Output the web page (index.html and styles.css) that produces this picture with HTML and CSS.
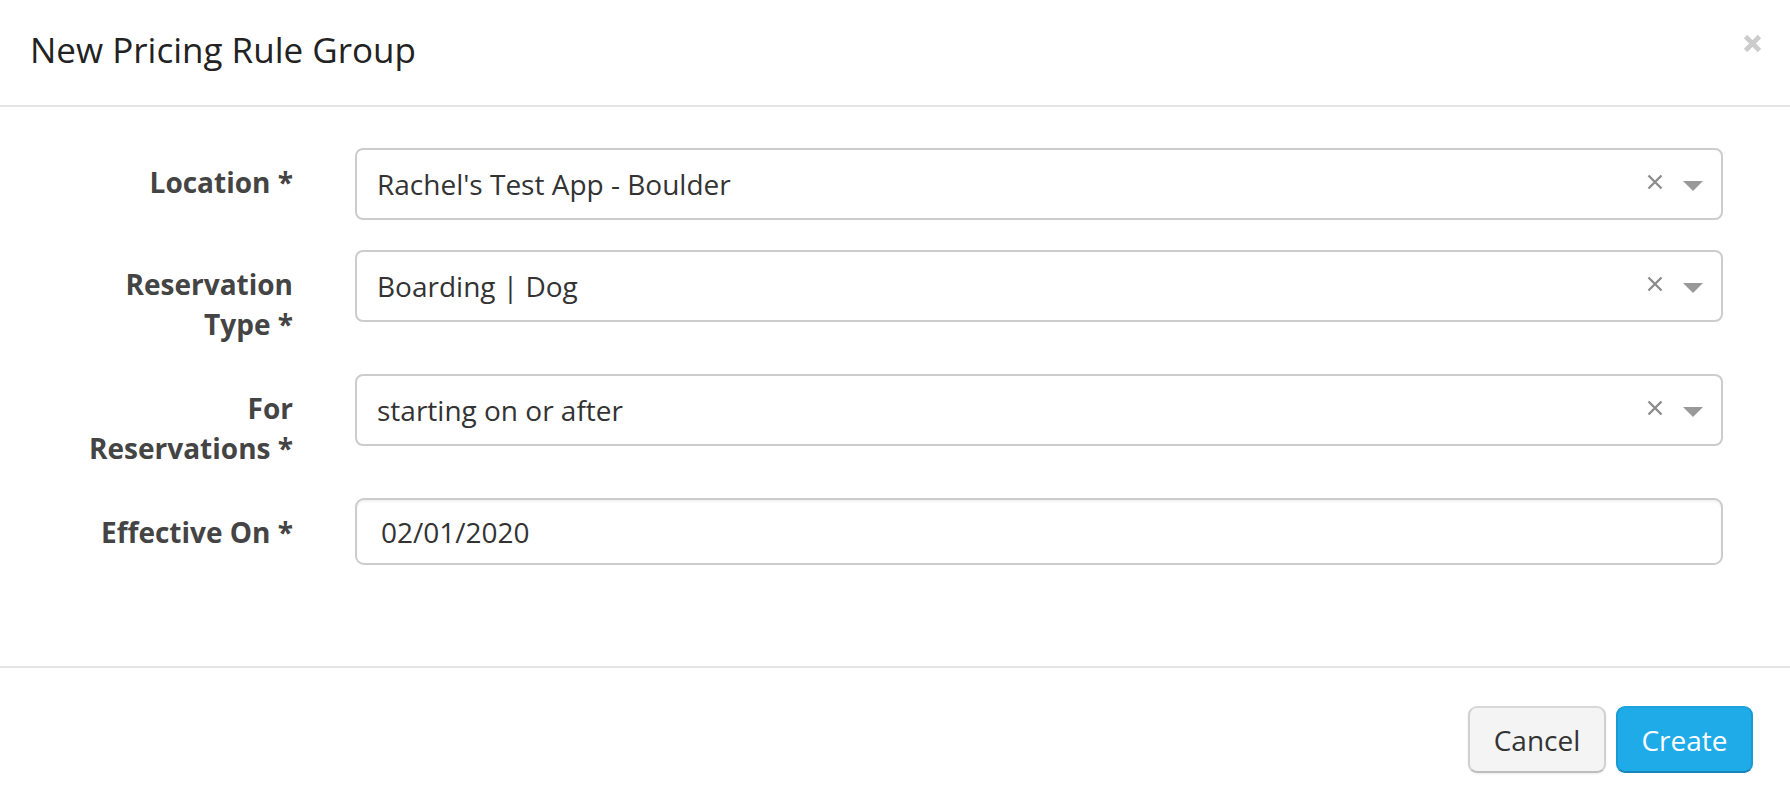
FILE: index.html
```
<!DOCTYPE html>
<html lang="en">
<head>
<meta charset="utf-8">
<title>New Pricing Rule Group</title>
<link rel="stylesheet" href="styles.css">
</head>
<body>
<div class="modal">
  <div class="modal-header">
    <h4 class="modal-title">New Pricing Rule Group</h4>
    <button class="close" type="button" aria-label="Close">
      <svg width="19" height="19" viewBox="0 0 19 19"><path d="M2.5 2.5 L16.5 16.5 M16.5 2.5 L2.5 16.5" stroke="#cccccc" stroke-width="4.6" stroke-linecap="butt" fill="none"/></svg>
    </button>
  </div>
  <div class="modal-body">
    <div class="form-group">
      <label class="control-label">Location *</label>
      <div class="select">
        <span class="select-value">Rachel's Test App - Boulder</span>
        <span class="select-clear"><svg width="16" height="16" viewBox="0 0 16 16"><path d="M1.5 1.5 L14.5 14.5 M14.5 1.5 L1.5 14.5" stroke="#8c8c8c" stroke-width="2.4" fill="none"/></svg></span>
        <span class="select-arrow"></span>
      </div>
    </div>
    <div class="form-group">
      <label class="control-label">Reservation<br>Type *</label>
      <div class="select">
        <span class="select-value">Boarding | Dog</span>
        <span class="select-clear"><svg width="16" height="16" viewBox="0 0 16 16"><path d="M1.5 1.5 L14.5 14.5 M14.5 1.5 L1.5 14.5" stroke="#8c8c8c" stroke-width="2.4" fill="none"/></svg></span>
        <span class="select-arrow"></span>
      </div>
    </div>
    <div class="form-group">
      <label class="control-label">For<br>Reservations *</label>
      <div class="select">
        <span class="select-value">starting on or after</span>
        <span class="select-clear"><svg width="16" height="16" viewBox="0 0 16 16"><path d="M1.5 1.5 L14.5 14.5 M14.5 1.5 L1.5 14.5" stroke="#8c8c8c" stroke-width="2.4" fill="none"/></svg></span>
        <span class="select-arrow"></span>
      </div>
    </div>
    <div class="form-group last">
      <label class="control-label">Effective On *</label>
      <div class="input">02/01/2020</div>
    </div>
  </div>
  <div class="modal-footer">
    <button class="btn btn-default" type="button">Cancel</button>
    <button class="btn btn-primary" type="button">Create</button>
  </div>
</div>
</body>
</html>
```
FILE: styles.css
```
html, body {
  margin: 0;
  padding: 0;
  background: #ffffff;
}
body {
  font-family: "Open Sans", "Noto Sans", sans-serif;
  font-size: 28px;
  line-height: 40px;
  color: #333333;
  width: 1790px;
  height: 810px;
  overflow: hidden;
}
.modal {
  width: 1790px;
}
.modal-header {
  display: flex;
  align-items: flex-start;
  justify-content: space-between;
  padding: 24px 28px 30px 30px;
  border-bottom: 2px solid #e5e5e5;
}
.modal-title {
  margin: 0;
  font-size: 35px;
  line-height: 51px;
  font-weight: 400;
  color: #222222;
}
.close {
  border: 0;
  background: transparent;
  padding: 0;
  margin-top: 10px;
  width: 19px;
  height: 19px;
  display: block;
  cursor: pointer;
}
.close svg {
  display: block;
}
.modal-body {
  padding: 41px 67px 0 30px;
}
.form-group {
  display: grid;
  grid-template-columns: 263px 1fr;
  column-gap: 62px;
  align-items: start;
  margin-bottom: 30px;
}
.form-group.last {
  margin-bottom: 101px;
}
.control-label {
  text-align: right;
  font-weight: 700;
  color: #444444;
  padding-top: 14px;
}
.select {
  box-sizing: border-box;
  height: 72px;
  border: 2px solid #cccccc;
  border-radius: 8px;
  display: flex;
  align-items: center;
  padding: 0 18px 0 20px;
}
.select-value {
  flex: 1;
  color: #333333;
  white-space: nowrap;
}
.select-clear {
  display: flex;
  width: 16px;
  height: 16px;
  margin-right: 20px;
  margin-top: -4px;
}
.select-clear svg {
  display: block;
}
.select-arrow {
  width: 0;
  height: 0;
  border-left: 10px solid transparent;
  border-right: 10px solid transparent;
  border-top: 10px solid #999999;
  margin-top: 4px;
}
.input {
  box-sizing: border-box;
  height: 67px;
  border: 2px solid #cccccc;
  border-radius: 9px;
  padding: 12px 24px;
  color: #333333;
  box-shadow: inset 0 2px 2px rgba(0, 0, 0, 0.05);
}
.modal-footer {
  border-top: 2px solid #e5e5e5;
  display: flex;
  justify-content: flex-end;
  gap: 10px;
  padding: 38px 37px 0 0;
}
.btn {
  box-sizing: border-box;
  height: 67px;
  width: 138px;
  font-family: "Open Sans", "Noto Sans", sans-serif;
  font-size: 28px;
  line-height: 40px;
  padding: 0;
  border-radius: 9px;
  border: 2px solid;
  cursor: pointer;
}
.btn-default {
  background: #f4f4f4;
  border-color: #d8d8d8 #d0d0d0 #bdbdbd;
  color: #333333;
  box-shadow: 0 1px 2px rgba(0, 0, 0, 0.08);
}
.btn-primary {
  width: 137px;
  background: #1eabe8;
  border-color: #1ea2dc #1a9ad2 #1786b8;
  color: #ffffff;
}
```
